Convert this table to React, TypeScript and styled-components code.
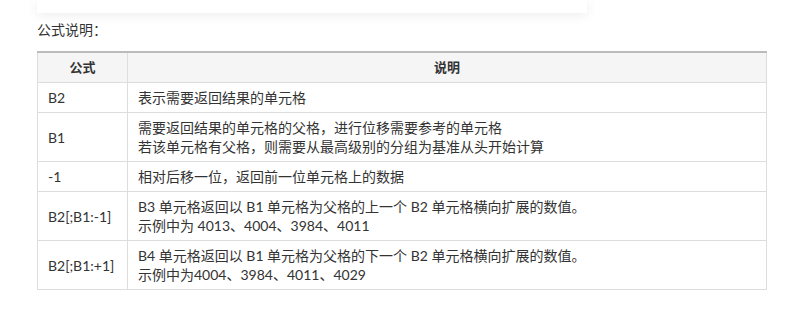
import styled, { createGlobalStyle } from "styled-components";

const GlobalStyle = createGlobalStyle`
  body {
    margin: 0;
    background: #fff;
    font-family: Lato, "Noto Sans CJK SC", sans-serif;
    color: #333;
  }
`;

const S_Page = styled.div`
  padding: 0 26px 0 37px;
`;

const S_Card = styled.div`
  width: 550px;
  height: 13px;
  background: #fff;
  box-shadow: 0 2px 12px rgba(0, 0, 0, 0.08);
`;

const S_Title = styled.p`
  margin: 7px 0 11px;
  font-size: 14px;
  line-height: 20px;
  color: #333;
`;

const S_Table = styled.table`
  width: 730px;
  table-layout: fixed;
  border-collapse: collapse;
  border-top: 2px solid #bbb;
  font-size: 14px;
  line-height: 19px;
`;

const S_Th = styled.th<{ $w?: number }>`
  box-sizing: border-box;
  width: ${(p) => (p.$w ? `${p.$w}px` : "auto")};
  background: #f5f5f5;
  border: 1px solid #ddd;
  border-top: none;
  padding: 5px 10px;
  font-weight: bold;
  font-size: 13px;
  color: #333;
  text-align: center;
`;

const S_Td = styled.td`
  border: 1px solid #ddd;
  padding: 5px 10px;
  color: #333;
  vertical-align: middle;
  white-space: nowrap;
`;

const rows: { formula: string; lines: string[] }[] = [
  { formula: "B2", lines: ["表示需要返回结果的单元格"] },
  {
    formula: "B1",
    lines: [
      "需要返回结果的单元格的父格，进行位移需要参考的单元格",
      "若该单元格有父格，则需要从最高级别的分组为基准从头开始计算",
    ],
  },
  { formula: "-1", lines: ["相对后移一位，返回前一位单元格上的数据"] },
  {
    formula: "B2[;B1:-1]",
    lines: [
      "B3 单元格返回以 B1 单元格为父格的上一个 B2 单元格横向扩展的数值。",
      "示例中为 4013、4004、3984、4011",
    ],
  },
  {
    formula: "B2[;B1:+1]",
    lines: [
      "B4 单元格返回以 B1 单元格为父格的下一个 B2 单元格横向扩展的数值。",
      "示例中为4004、3984、4011、4029",
    ],
  },
];

const App = () => {
  return (
    <>
      <GlobalStyle />
      <S_Page>
        <S_Card />
        <S_Title>公式说明：</S_Title>
        <S_Table>
          <thead>
            <tr>
              <S_Th $w={90}>公式</S_Th>
              <S_Th>说明</S_Th>
            </tr>
          </thead>
          <tbody>
            {rows.map((r) => (
              <tr key={r.formula}>
                <S_Td>{r.formula}</S_Td>
                <S_Td>
                  {r.lines.map((l, i) => (
                    <div key={i}>{l}</div>
                  ))}
                </S_Td>
              </tr>
            ))}
          </tbody>
        </S_Table>
      </S_Page>
    </>
  );
};

export default App;
